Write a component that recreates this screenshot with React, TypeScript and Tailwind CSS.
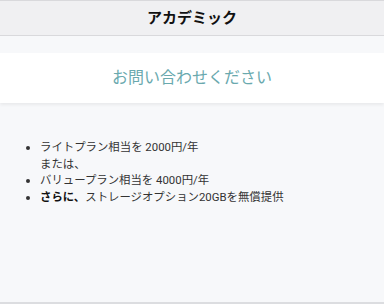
export default function App() {
  return (
    <div
      className="flex h-[304px] w-[384px] flex-col border-b-2 border-[#dcdde0] bg-[#f7f8fa] text-[#333]"
      style={{ fontFamily: 'Roboto, "Noto Sans CJK JP", sans-serif' }}
    >
      <div className="flex h-[36px] items-center justify-center border-y border-[#d9d9dc] bg-[#f0f0f2]">
        <span className="text-[15px] font-bold text-[#111]">アカデミック</span>
      </div>
      <div className="mt-[17px] flex h-[50px] items-center justify-center bg-white shadow-[0_2px_3px_rgba(0,0,0,0.06)]">
        <span className="text-[16px] text-[#6aa9ae]">お問い合わせください</span>
      </div>
      <ul className="mt-[36px] list-disc pl-[40px] text-[11.4px] leading-[16.5px] text-[#333]">
        <li>
          ライトプラン相当を 2000円/年
          <br />
          または、
        </li>
        <li>バリュープラン相当を 4000円/年</li>
        <li>
          <b className="font-bold text-[#111]">さらに、</b>ストレージオプション20GBを無償提供
        </li>
      </ul>
    </div>
  );
}
